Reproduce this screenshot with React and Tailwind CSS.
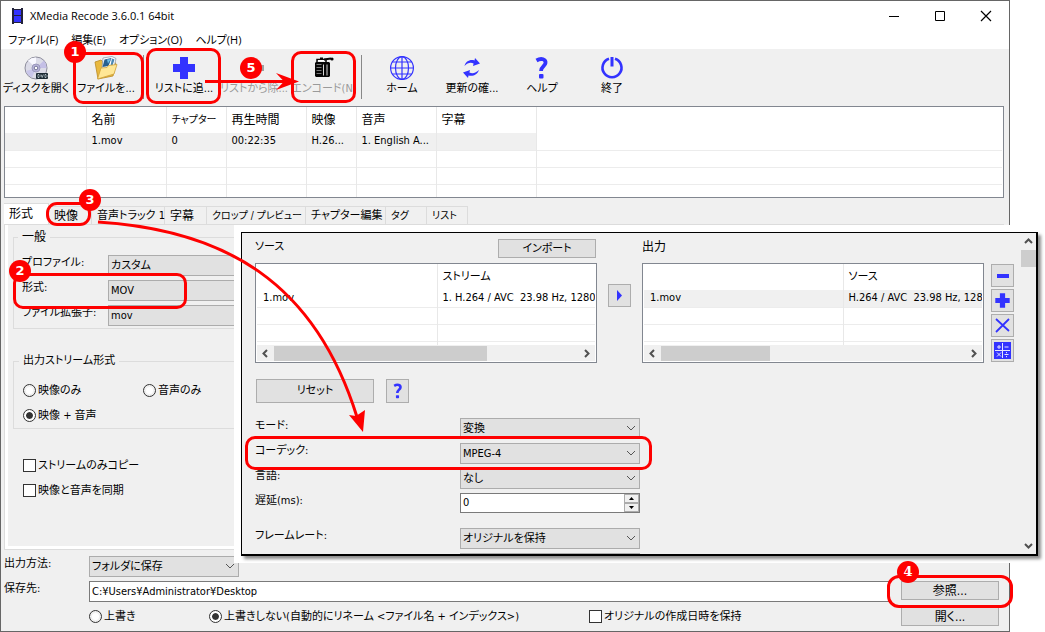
import { useState } from 'react'

const BLUE = '#3333ff'

function Select({ label, options, className = '', id }) {
  return (
    <div className={`relative ${className}`}>
      <select id={id} aria-label={label} className="block h-[21px] w-full appearance-none border border-[#acacac] bg-[#e1e1e1] pl-[2px] pr-5 text-[11px] leading-4">
        {options.map(o => <option key={o}>{o}</option>)}
      </select>
      <svg className="pointer-events-none absolute right-1 top-[7px]" width="10" height="7" viewBox="0 0 10 7" fill="none" stroke="#555">
        <path d="M1 1l4 4 4-4" />
      </svg>
    </div>
  )
}

function Radio({ name, label, checked, onChange, className = '' }) {
  return (
    <label className={`flex h-[21px] items-center gap-[2px] whitespace-nowrap ${className}`}>
      <input type="radio" name={name} checked={checked} onChange={onChange} className="size-[13px] shrink-0 appearance-none rounded-full border border-[#333] bg-white bg-clip-content p-[2px] checked:bg-[#333] checked:shadow-[inset_0_0_0_2px_white]" />
      {label}
    </label>
  )
}

function Check({ label, className = '' }) {
  return (
    <label className={`flex h-[21px] items-center gap-[2px] whitespace-nowrap ${className}`}>
      <input type="checkbox" className="size-[13px] shrink-0 appearance-none border border-[#333] bg-white checked:bg-[#333]" />
      {label}
    </label>
  )
}

function Btn({ children, className = '', ...rest }) {
  return (
    <button className={`flex shrink-0 items-center justify-center border border-[#adadad] bg-[#e1e1e1] ${className}`} {...rest}>{children}</button>
  )
}

function Chevron({ dir }) {
  const d = {
    left: 'M6 1L2.5 4.5L6 8',
    right: 'M3 1l3.5 3.5L3 8',
    up: 'M1 6l3.5-3.5L8 6',
    down: 'M1 3l3.5 3.5L8 3',
  }[dir]
  return <svg width="9" height="9" viewBox="0 0 9 9" fill="none" stroke="#505050" strokeWidth="2"><path d={d} /></svg>
}

/* toolbar icons, all on a 26px canvas */
const svgProps = { width: 26, height: 26, viewBox: '0 0 26 26', fill: 'none' }

const DiscIcon = () => (
  <svg {...svgProps}>
    <circle cx="13" cy="13" r="11" fill="#dcdce8" stroke="#8d8d9c" />
    <path d="M13 13L5 5.5A11 11 0 0 1 13 2.5z" fill="#f8f8ff" />
    <path d="M13 13l8-7.5A11 11 0 0 1 23.5 13z" fill="#c4bfe6" />
    <path d="M13 13l-10 3a11 11 0 0 0 6 6.500z" fill="#c9c6ea" />
    <circle cx="13" cy="13" r="4" fill="#b9b5dc" stroke="#9a98bb" />
    <circle cx="13" cy="13" r="1.800" fill="#fff" stroke="#77779a" />
    <rect x="13" y="18" width="12" height="6" rx="1" fill="#1c2a33" />
    <path d="M15 19.500v3h1l1-1v-1l-1-1zM18 19.500l1.200 3 1.200-3M22 19.500v3h1l1-1v-1l-1-1z" stroke="#d5e4ea" strokeWidth=".7" />
  </svg>
)

const FolderIcon = () => (
  <svg {...svgProps}>
    <path d="M2 7l6-2 2 2 11-1 2 3-3 12L5 24z" fill="#e9b93f" stroke="#b98a25" strokeWidth=".8" />
    <path d="M10 3l9-1.500 4 2-2 9-12 1z" fill="#fff" stroke="#7f8fa3" strokeWidth=".7" />
    <path d="M11.500 4.500l7-1.500-3 8-6 1z" fill="#27608f" />
    <path d="M14 4.500l4-.5-3 4.500z" fill="#6fc0e8" />
    <path d="M19 3.500l2.500 1-2 6h-2z" fill="#4a88b5" />
    <path d="M4.500 24l3.500-11 6-.5 1.500-2 8.500-1-3 9.500z" fill="#ffe795" stroke="#cfa23a" strokeWidth=".8" />
  </svg>
)

const PlusIcon = ({ size = 26 }) => (
  <svg width={size} height={size} viewBox="0 0 26 26"><path d="M9 2h8v7h7v8h-7v7H9v-7H2V9h7z" fill={BLUE} /></svg>
)

const MinusIcon = () => (
  <svg {...svgProps}><path d="M2 10h21v6H2z" fill="#a0a0a0" /></svg>
)

const EncodeIcon = () => (
  <svg {...svgProps}>
    <path d="M4 8l1-1h13l1 1v13l-1 1H5l-1-1z" fill="#050505" />
    <path d="M6 7V4.500h9V7" stroke="#050505" strokeWidth="1.500" />
    <path d="M9 3.500h3M13 4.500l7-1" stroke="#050505" strokeWidth="2" />
    <circle cx="21" cy="4" r="1.600" fill="#050505" />
    <path d="M5.500 9.500h5M5.500 12.500h5M5.500 15.500h5M5.500 18.500h5" stroke="#777" />
    <path d="M12.500 9.500v11M16 9.500v11" stroke="#d8d8d8" />
    <path d="M7 5.500h6" stroke="#fff" />
  </svg>
)

const GlobeIcon = () => (
  <svg {...svgProps} stroke={BLUE} strokeWidth="1.200">
    <circle cx="13" cy="13" r="11.400" />
    <ellipse cx="13" cy="13" rx="6.500" ry="11.400" />
    <path d="M13 1.600v22.800M1.600 13h22.800M3.500 7h19M3.500 19h19" />
  </svg>
)

const RefreshIcon = () => (
  <svg {...svgProps} fill={BLUE}>
    <path d="M5.500 11C6.500 6.500 11 4 15.500 5.500L16 3l5 5.500-7 2.500 .6-2.500C11.500 7 8.500 8 5.500 11z" />
    <path d="M20 15c-1.500 4.500-6 6.800-10.500 5.500L9 23l-5-5.500 7-2.500-.6 2.500c3.100 1.500 6.600.5 9.600-2.500z" />
  </svg>
)

const HelpIcon = ({ size = 26 }) => (
  <svg width={size} height={size} viewBox="0 0 26 26" fill="none">
    <path d="M7.500 5.500C12.500 2.500 17 4.500 16.500 8c-.3 3-4.500 3.500-4.500 8" stroke={BLUE} strokeWidth="3.800" />
    <rect x="10" y="19" width="4.500" height="4.500" rx="1" fill={BLUE} />
  </svg>
)

const PowerIcon = () => (
  <svg {...svgProps} stroke={BLUE} strokeWidth="2.600">
    <path d="M10 3.700a9.500 9.500 0 1 0 6 0" />
    <path d="M13 2v9.500" strokeWidth="3" />
  </svg>
)

const tools = [
  { icon: DiscIcon, label: 'ディスクを開く' },
  { icon: FolderIcon, label: 'ファイルを...' },
  null,
  { icon: PlusIcon, label: 'リストに追...' },
  { icon: MinusIcon, label: 'リストから除...', off: true },
  { icon: EncodeIcon, label: 'エンコード(N)', off: true },
  null,
  { icon: GlobeIcon, label: 'ホーム' },
  { icon: RefreshIcon, label: '更新の確...' },
  { icon: HelpIcon, label: 'ヘルプ' },
  { icon: PowerIcon, label: '終了' },
]

function TitleBar() {
  return (
    <header className="bg-white">
      <div className="flex h-[30px] items-center pl-[11px]">
        <svg width="11" height="16" viewBox="0 0 11 16">
          <path d="M0 0h2v1h7V0h2v16H9v-1H2v1H0z" fill="#22223a" />
          <path d="M2 2h7v5H2zM2 8h7v6H2z" fill={BLUE} />
        </svg>
        <h1 className="ml-[7px] flex-1 font-['Open_Sans','Noto_Sans_CJK_JP',sans-serif] text-[11px]">XMedia Recode 3.6.0.1 64bit</h1>
        <div className="mr-[17px] flex items-center gap-[34px]">
          <button aria-label="最小化"><svg className="block" width="12" height="12"><path d="M1 6.500h10" stroke="#000" /></svg></button>
          <button aria-label="最大化"><svg className="block" width="12" height="12" fill="none"><path d="M1.500 1.500h9v9h-9z" stroke="#000" /></svg></button>
          <button aria-label="閉じる"><svg className="block" width="12" height="12"><path d="M1 1l10 10M11 1L1 11" stroke="#000" strokeWidth="1.200" /></svg></button>
        </div>
      </div>
      <nav className="flex h-[18px] items-center gap-[13px] pl-[7px] font-['Open_Sans','Noto_Sans_CJK_JP',sans-serif] text-[11px]">
        <button>ファイル(F)</button>
        <button>編集(E)</button>
        <button>オプション(O)</button>
        <button>ヘルプ(H)</button>
      </nav>
    </header>
  )
}

function Toolbar() {
  return (
    <div className="flex h-[57px] pt-[6px]">
      {tools.map((t, i) => t === null
        ? <div key={i} className="w-2 pl-[2px]"><div className="h-[44px] w-px bg-[#888]" /></div>
        : (
          <button key={i} className={`flex w-[70px] shrink-0 flex-col items-center whitespace-nowrap leading-4 ${t.off ? 'text-[#9a9a9a]' : ''}`}>
            <t.icon />
            <span>{t.label}</span>
          </button>
        ))}
    </div>
  )
}

const columns = [
  ['', ''],
  ['名前', 'text-[12px]'],
  ['チャプター', 'text-[10px]'],
  ['再生時間', 'text-[12px]'],
  ['映像', 'text-[12px]'],
  ['音声', 'text-[12px]'],
  ['字幕', 'text-[12px]'],
]

function FileList() {
  const cell = 'border-r border-[#e8e8e8] px-[5px] text-left font-normal'
  return (
    <div className="ml-[3px] mr-[5px] h-[92px] overflow-hidden border border-[#828790] bg-white pr-px">
      <table className="w-full table-fixed border-collapse whitespace-nowrap">
        <colgroup>
          <col className="w-[81px]" />
          <col className="w-[80px]" />
          <col className="w-[60px]" />
          <col className="w-[80px]" />
          <col className="w-[50px]" />
          <col className="w-[80px]" />
          <col className="w-[100px]" />
          <col />
        </colgroup>
        <thead>
          <tr className="h-[26px]">
            {columns.map(([h, size], i) => <th key={i} className={`${cell} ${size}`}>{h}</th>)}
            <th />
          </tr>
        </thead>
        <tbody className="leading-4">
          <tr className="h-[17px] border-b border-[#ececec]">
            {['', '1.mov', '0', '00:22:35', 'H.26...', '1. English A...', ''].map((c, i) => <td key={i} className={`${cell} bg-[#f0f0f0]`}>{c}</td>)}
            <td />
          </tr>
          {[0, 1, 2].map(r => (
            <tr key={r} className="h-[17px] border-b border-[#ececec]">
              {[0, 1, 2, 3, 4, 5, 6].map(c => <td key={c} className={cell} />)}
              <td />
            </tr>
          ))}
        </tbody>
      </table>
    </div>
  )
}

const tabs = [
  ['形式', 'w-[45px] text-[12px]'],
  ['映像', 'w-[43px] text-[12px]'],
  ['音声トラック 1', 'w-[73px] text-[11px]'],
  ['字幕', 'w-[42px] text-[12px]'],
  ['クロップ / プレビュー', 'w-[99px] text-[10px]'],
  ['チャプター編集', 'w-[80px] text-[11px]'],
  ['タグ', 'w-[41px] text-[10px]'],
  ['リスト', 'w-[41px] text-[10px]'],
]

function Tabs() {
  const [active, setActive] = useState(0)
  return (
    <div role="tablist" className="mx-[3px] mt-[5px] flex h-[21px] items-end">
      {tabs.map(([name, look], i) => (
        <button key={name} role="tab" aria-selected={i === active} onClick={() => setActive(i)}
          className={`${look} shrink-0 whitespace-nowrap border-r border-t border-[#dcdcdc] pl-[5px] text-left leading-4 ${i === active ? 'h-[21px] bg-white' : 'h-[18px] bg-[#f0f0f0]'}`}>
          {name}
        </button>
      ))}
    </div>
  )
}

function Field({ id, label, value }) {
  return (
    <div className="flex items-start">
      <label htmlFor={id} className="w-[86px] shrink-0 leading-4">{label}</label>
      <Select id={id} options={[value]} className="flex-1" />
    </div>
  )
}

function FormatPanel() {
  const [streams, setStreams] = useState('both')
  return (
    <div className="ml-[3px] mr-[5px] border border-[#dcdcdc] bg-white p-[3px] pt-0">
      <div className="bg-[#f0f0f0] px-[5px] pb-[45px] pt-1">
        <fieldset className="border border-[#dcdcdc] pb-[2px] pl-2 pr-2">
          <legend className="-ml-1 px-1 text-[12px] leading-4">一般</legend>
          <div className="mt-[10px] flex flex-col gap-1">
            <Field id="profile" label="プロファイル:" value="カスタム" />
            <Field id="format" label="形式:" value="MOV" />
            <Field id="ext" label="ファイル拡張子:" value="mov" />
          </div>
        </fieldset>
        <fieldset className="mt-6 border border-[#dcdcdc] pb-[2px] pl-[9px]">
          <legend className="-ml-1 px-1 leading-4">出力ストリーム形式</legend>
          <div className="mt-[11px] flex flex-wrap gap-y-1">
            <Radio name="streams" label="映像のみ" checked={streams === 'video'} onChange={() => setStreams('video')} className="w-[120px]" />
            <Radio name="streams" label="音声のみ" checked={streams === 'audio'} onChange={() => setStreams('audio')} />
            <Radio name="streams" label="映像 + 音声" checked={streams === 'both'} onChange={() => setStreams('both')} className="w-full" />
          </div>
        </fieldset>
        <div className="mt-[26px] flex flex-col gap-1 pl-[10px]">
          <Check label="ストリームのみコピー" />
          <Check label="映像と音声を同期" />
        </div>
      </div>
    </div>
  )
}

function OutputBar() {
  const [mode, setMode] = useState('keep')
  return (
    <footer className="mt-[6px] flex flex-col gap-1 pb-[4px] pl-[3px] pr-[10px]">
      <div className="flex items-start">
        <label htmlFor="method" className="w-[85px] leading-4">出力方法:</label>
        <Select id="method" options={['フォルダに保存']} className="w-[150px]" />
      </div>
      <div className="flex items-start">
        <label htmlFor="dest" className="w-[85px] leading-4">保存先:</label>
        <input id="dest" type="text" defaultValue="C:¥Users¥Administrator¥Desktop" className="h-[21px] min-w-0 flex-1 border border-[#7a7a7a] bg-white px-[2px]" />
        <Btn className="ml-3 h-[19px] w-[98px] text-[12px]">参照...</Btn>
      </div>
      <div className="flex items-center pl-[85px]">
        <Radio name="overwrite" label="上書き" checked={mode === 'over'} onChange={() => setMode('over')} className="w-[120px]" />
        <Radio name="overwrite" label="上書きしない(自動的にリネーム <ファイル名 + インデックス>)" checked={mode === 'keep'} onChange={() => setMode('keep')} className="w-[380px]" />
        <Check label="オリジナルの作成日時を保持" className="flex-1" />
        <Btn className="h-[19px] w-[98px] text-[12px]">開く...</Btn>
      </div>
    </footer>
  )
}

function StreamBox({ head, text, selected, firstCol, thumb }) {
  return (
    <div className="flex h-[100px] flex-col border border-[#828790] bg-white px-px">
      <div className="h-[81px] overflow-hidden">
        <table className="w-full table-fixed border-collapse whitespace-nowrap">
          <colgroup>
            <col className={firstCol} />
            <col />
          </colgroup>
          <thead>
            <tr className="h-[26px]">
              <th className="border-r border-[#e8e8e8]" />
              <th className="pl-[5px] text-left font-normal">{head}</th>
            </tr>
          </thead>
          <tbody className="leading-4">
            <tr className={`h-[17px] border-b border-[#ececec] ${selected ? 'bg-[#f0f0f0]' : ''}`}>
              <td className="border-r border-[#e8e8e8] pl-[6px]">1.mov</td>
              <td className="whitespace-pre pl-[5px]">{text}</td>
            </tr>
            {[0, 1, 2].map(r => (
              <tr key={r} className="h-[17px] border-b border-[#ececec]"><td className="border-r border-[#e8e8e8]" /><td /></tr>
            ))}
          </tbody>
        </table>
      </div>
      <div className="flex h-[16px] items-center bg-[#f0f0f0]">
        <span className="flex w-[17px] justify-center"><Chevron dir="left" /></span>
        <span className="h-[15px] flex-1"><span className={`block h-full bg-[#cdcdcd] ${thumb}`} /></span>
        <span className="flex w-[17px] justify-center"><Chevron dir="right" /></span>
      </div>
    </div>
  )
}

function Row({ id, label, value, className = '' }) {
  return (
    <div className={`flex items-start ${className}`}>
      <label htmlFor={id} className="w-[205px] shrink-0 leading-4">{label}</label>
      <Select id={id} label={label ? undefined : 'レート制御モード'} options={[value]} className="w-[180px]" />
    </div>
  )
}

function VideoPanel() {
  return (
    <section className="absolute left-[234px] right-0 top-[225px] bg-white p-[7px]">
      <div className="flex h-[324px] overflow-hidden border border-b-2 border-r-2 border-black bg-[#f0f0f0] shadow-[3px_3px_3px_rgba(0,0,0,0.45)]">
        <div className="min-w-0 flex-1 pl-[13px] pr-[6px] pt-[6px]">
          <div className="flex items-start">
            <div className="min-w-0 flex-1">
              <div className="flex h-6 items-start justify-between pr-px">
                <h2 className="leading-4">ソース</h2>
                <Btn className="h-[19px] w-[98px]">インポート</Btn>
              </div>
              <StreamBox head="ストリーム" text="1. H.264 / AVC  23.98 Hz, 1280" firstCol="w-[180px]" thumb="w-[70%]" />
            </div>
            <Btn className="mx-[11px] mt-[45px] size-[23px]" aria-label="追加">
              <svg width="7" height="11"><path d="M1 0l5 5.500L1 11z" fill={BLUE} /></svg>
            </Btn>
            <div className="min-w-0 flex-1">
              <h2 className="h-6 text-[12px] leading-4">出力</h2>
              <StreamBox head="ソース" text="H.264 / AVC  23.98 Hz, 128" selected firstCol="w-[199px]" thumb="w-[36%]" />
            </div>
            <div className="ml-[7px] mt-[25px] flex flex-col gap-[2px]">
              <Btn className="size-[23px]" aria-label="削除"><svg width="12" height="4"><path d="M0 0h12v4H0z" fill={BLUE} /></svg></Btn>
              <Btn className="size-[23px]" aria-label="複製"><PlusIcon size={17} /></Btn>
              <Btn className="size-[23px]" aria-label="クリア"><svg width="15" height="15" viewBox="0 0 15 15"><path d="M1 1l13 12M14 1L1 14" stroke={BLUE} strokeWidth="1.800" /></svg></Btn>
              <Btn className="size-[23px]" aria-label="計算">
                <svg width="17" height="17" viewBox="0 0 17 17">
                  <path d="M0 0h17v17H0z" fill={BLUE} />
                  <path d="M8.500 1v15M1 8.500h15M5 3v4M3 5h4M10.500 5h4M3 10.500l4 4M7 10.500l-4 4M10.500 12.500h4M12.500 10v1.200M12.500 14v1.200" stroke="#e6e6ff" fill="none" />
                </svg>
              </Btn>
            </div>
          </div>
          <div className="mt-4 flex gap-3 pl-px">
            <Btn className="h-6 w-[118px]">リセット</Btn>
            <Btn className="h-6 w-[23px]" aria-label="ヘルプ"><HelpIcon size={18} /></Btn>
          </div>
          <div className="mt-[15px] flex flex-col gap-1">
            <Row id="mode" label="モード:" value="変換" />
            <Row id="codec" label="コーデック:" value="MPEG-4" />
            <Row id="lang" label="言語:" value="なし" />
            <div className="flex items-start">
              <label htmlFor="delay" className="w-[205px] shrink-0 leading-4">遅延(ms):</label>
              <div className="flex h-[20px] w-[180px] border border-[#7a7a7a] bg-white">
                <input id="delay" type="text" defaultValue="0" className="min-w-0 flex-1 px-[2px]" />
                <div className="flex w-[15px] flex-col">
                  <button aria-label="増やす" className="flex flex-1 items-center justify-center border border-[#acacac] bg-[#f0f0f0]"><svg width="5" height="3"><path d="M0 3L2.500 0 5 3z" /></svg></button>
                  <button aria-label="減らす" className="flex flex-1 items-center justify-center border border-[#acacac] bg-[#f0f0f0]"><svg width="5" height="3"><path d="M0 0l2.500 3L5 0z" /></svg></button>
                </div>
              </div>
            </div>
            <Row id="fps" label="フレームレート:" value="オリジナルを保持" className="mt-[11px]" />
            <Row id="rate" label="" value="" />
          </div>
        </div>
        <div className="flex w-4 flex-col items-center bg-[#f0f0f0]">
          <span className="flex h-[17px] items-center"><Chevron dir="up" /></span>
          <span className="h-[17px] w-[15px] bg-[#cdcdcd]" />
          <span className="flex-1" />
          <span className="flex h-[17px] items-center"><Chevron dir="down" /></span>
        </div>
      </div>
    </section>
  )
}

function Ring({ className }) {
  return <div className={`absolute border-[3px] border-[#fe0000] ${className}`} />
}

function Badge({ n, className }) {
  return (
    <div className={`absolute flex size-[22px] items-center justify-center rounded-full bg-[#fe0000] text-[13px] font-bold text-white ${className}`}>{n}</div>
  )
}

function Callouts() {
  return (
    <div className="pointer-events-none absolute inset-0">
      <Ring className="left-[73px] top-[52px] h-[52px] w-[71px] rounded-[10px]" />
      <Ring className="left-[146px] top-[48px] h-[56px] w-[75px] rounded-[10px]" />
      <Ring className="left-[291px] top-[51px] h-[52px] w-[65px] rounded-[10px]" />
      <Ring className="left-[46px] top-[202px] h-[24px] w-[45px] rounded-[11px]" />
      <Ring className="left-[13px] top-[273px] h-[36px] w-[174px] rounded-[10px]" />
      <Ring className="left-[245px] top-[436px] h-[34px] w-[407px] rounded-[10px]" />
      <Ring className="right-[32px] top-[575px] h-[33px] w-[126px] rounded-[12px]" />
      <svg className="absolute left-0 top-0" width="400" height="440" viewBox="0 0 400 440" fill="none">
        <path d="M205 81.500h80" stroke="#fe0000" strokeWidth="3" />
        <path d="M276 73l23 8.500L276 90l8-8.500z" fill="#fe0000" />
        <path d="M98 222C225 230 315 282 357 417" stroke="#fe0000" strokeWidth="3" />
        <path d="M349 415l7 1 9-6-2 22z" fill="#fe0000" />
      </svg>
      <Badge n="1" className="left-[64px] top-[41px] font-['DejaVu_Sans',sans-serif]" />
      <Badge n="2" className="left-[9px] top-[260px] font-['DejaVu_Sans',sans-serif]" />
      <Badge n="3" className="left-[79px] top-[189px] font-['DejaVu_Sans',sans-serif]" />
      <Badge n="4" className="right-[126px] top-[561px] font-['DejaVu_Serif',serif]" />
      <Badge n="5" className="left-[240px] top-[57px] font-['DejaVu_Sans',sans-serif]" />
    </div>
  )
}

function App() {
  return (
    <div className="relative bg-white pr-[35px] font-['DejaVu_Sans_Condensed','Noto_Sans_CJK_JP',sans-serif] text-[11px] leading-4 text-black [font-feature-settings:'palt']">
      <div className="border border-[#666] bg-[#f0f0f0]">
        <TitleBar />
        <Toolbar />
        <FileList />
        <Tabs />
        <FormatPanel />
        <OutputBar />
      </div>
      <VideoPanel />
      <Callouts />
    </div>
  )
}

export default App
